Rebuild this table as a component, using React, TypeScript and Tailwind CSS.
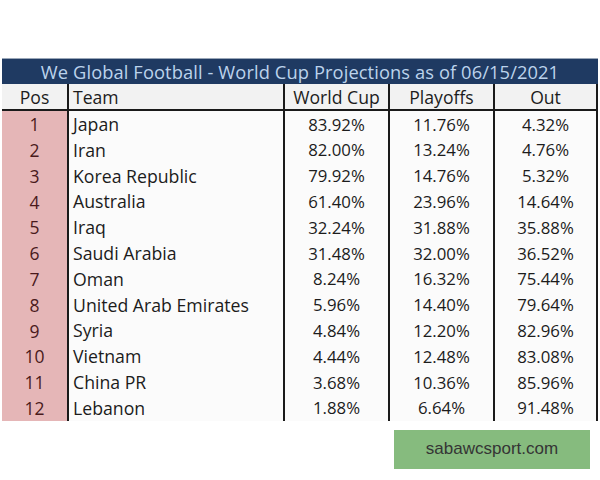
import React from 'react';

const rows: [number, string, string, string, string][] = [
  [1, 'Japan', '83.92%', '11.76%', '4.32%'],
  [2, 'Iran', '82.00%', '13.24%', '4.76%'],
  [3, 'Korea Republic', '79.92%', '14.76%', '5.32%'],
  [4, 'Australia', '61.40%', '23.96%', '14.64%'],
  [5, 'Iraq', '32.24%', '31.88%', '35.88%'],
  [6, 'Saudi Arabia', '31.48%', '32.00%', '36.52%'],
  [7, 'Oman', '8.24%', '16.32%', '75.44%'],
  [8, 'United Arab Emirates', '5.96%', '14.40%', '79.64%'],
  [9, 'Syria', '4.84%', '12.20%', '82.96%'],
  [10, 'Vietnam', '4.44%', '12.48%', '83.08%'],
  [11, 'China PR', '3.68%', '10.36%', '85.96%'],
  [12, 'Lebanon', '1.88%', '6.64%', '91.48%'],
];

const cols = 'grid grid-cols-[65px_216px_105px_105px_105px]';

export default function App() {
  return (
    <div className="w-[600px] h-[480px] bg-white overflow-hidden font-['Open_Sans',sans-serif] text-[#1c1c1c]">
      <div className="pt-[58px] pl-[2px] w-[598px]">
        <div className="h-[26px] bg-[#1f3a62] border-t border-[#9aa7b8] text-[#bcd3ec] text-[18.3px] tracking-[0.1px] flex items-center justify-center">
          We Global Football - World Cup Projections as of 06/15/2021
        </div>
        <div className={`${cols} h-[27px] bg-[#f2f2f2] border-b-2 border-[#1a1a1a] text-[17.6px]`}>
          <div className="flex items-center justify-center">Pos</div>
          <div className="flex items-center pl-[4px] border-l-2 border-[#1a1a1a]">Team</div>
          <div className="flex items-center justify-center border-l-2 border-[#1a1a1a]">World Cup</div>
          <div className="flex items-center justify-center border-l-2 border-[#1a1a1a]">Playoffs</div>
          <div className="flex items-center justify-center border-x-2 border-[#1a1a1a]">Out</div>
        </div>
        {rows.map(([pos, team, wc, po, out]) => (
          <div key={pos} className={`${cols} h-[25.8px] text-[16.8px]`}>
            <div className="flex items-center justify-center bg-[#e5b6b7] text-[#4a1a1c] text-[17.5px]">{pos}</div>
            <div className="flex items-center pl-[4px] border-l-2 border-[#1a1a1a] bg-[#fbfbfb] text-[17.7px]">{team}</div>
            <div className="flex items-center justify-center border-l-2 border-[#1a1a1a] bg-[#fbfbfb]">{wc}</div>
            <div className="flex items-center justify-center border-l-2 border-[#1a1a1a] bg-[#fbfbfb]">{po}</div>
            <div className="flex items-center justify-center border-x-2 border-[#1a1a1a] bg-[#fbfbfb]">{out}</div>
          </div>
        ))}
      </div>
      <div className="flex justify-end pr-[10px] pt-[9px]">
        <div className="w-[196px] h-[39px] bg-[#86bb7e] flex items-center justify-center text-[17px] text-[#353535] font-['Liberation_Sans',sans-serif]">
          sabawcsport.com
        </div>
      </div>
    </div>
  );
}
